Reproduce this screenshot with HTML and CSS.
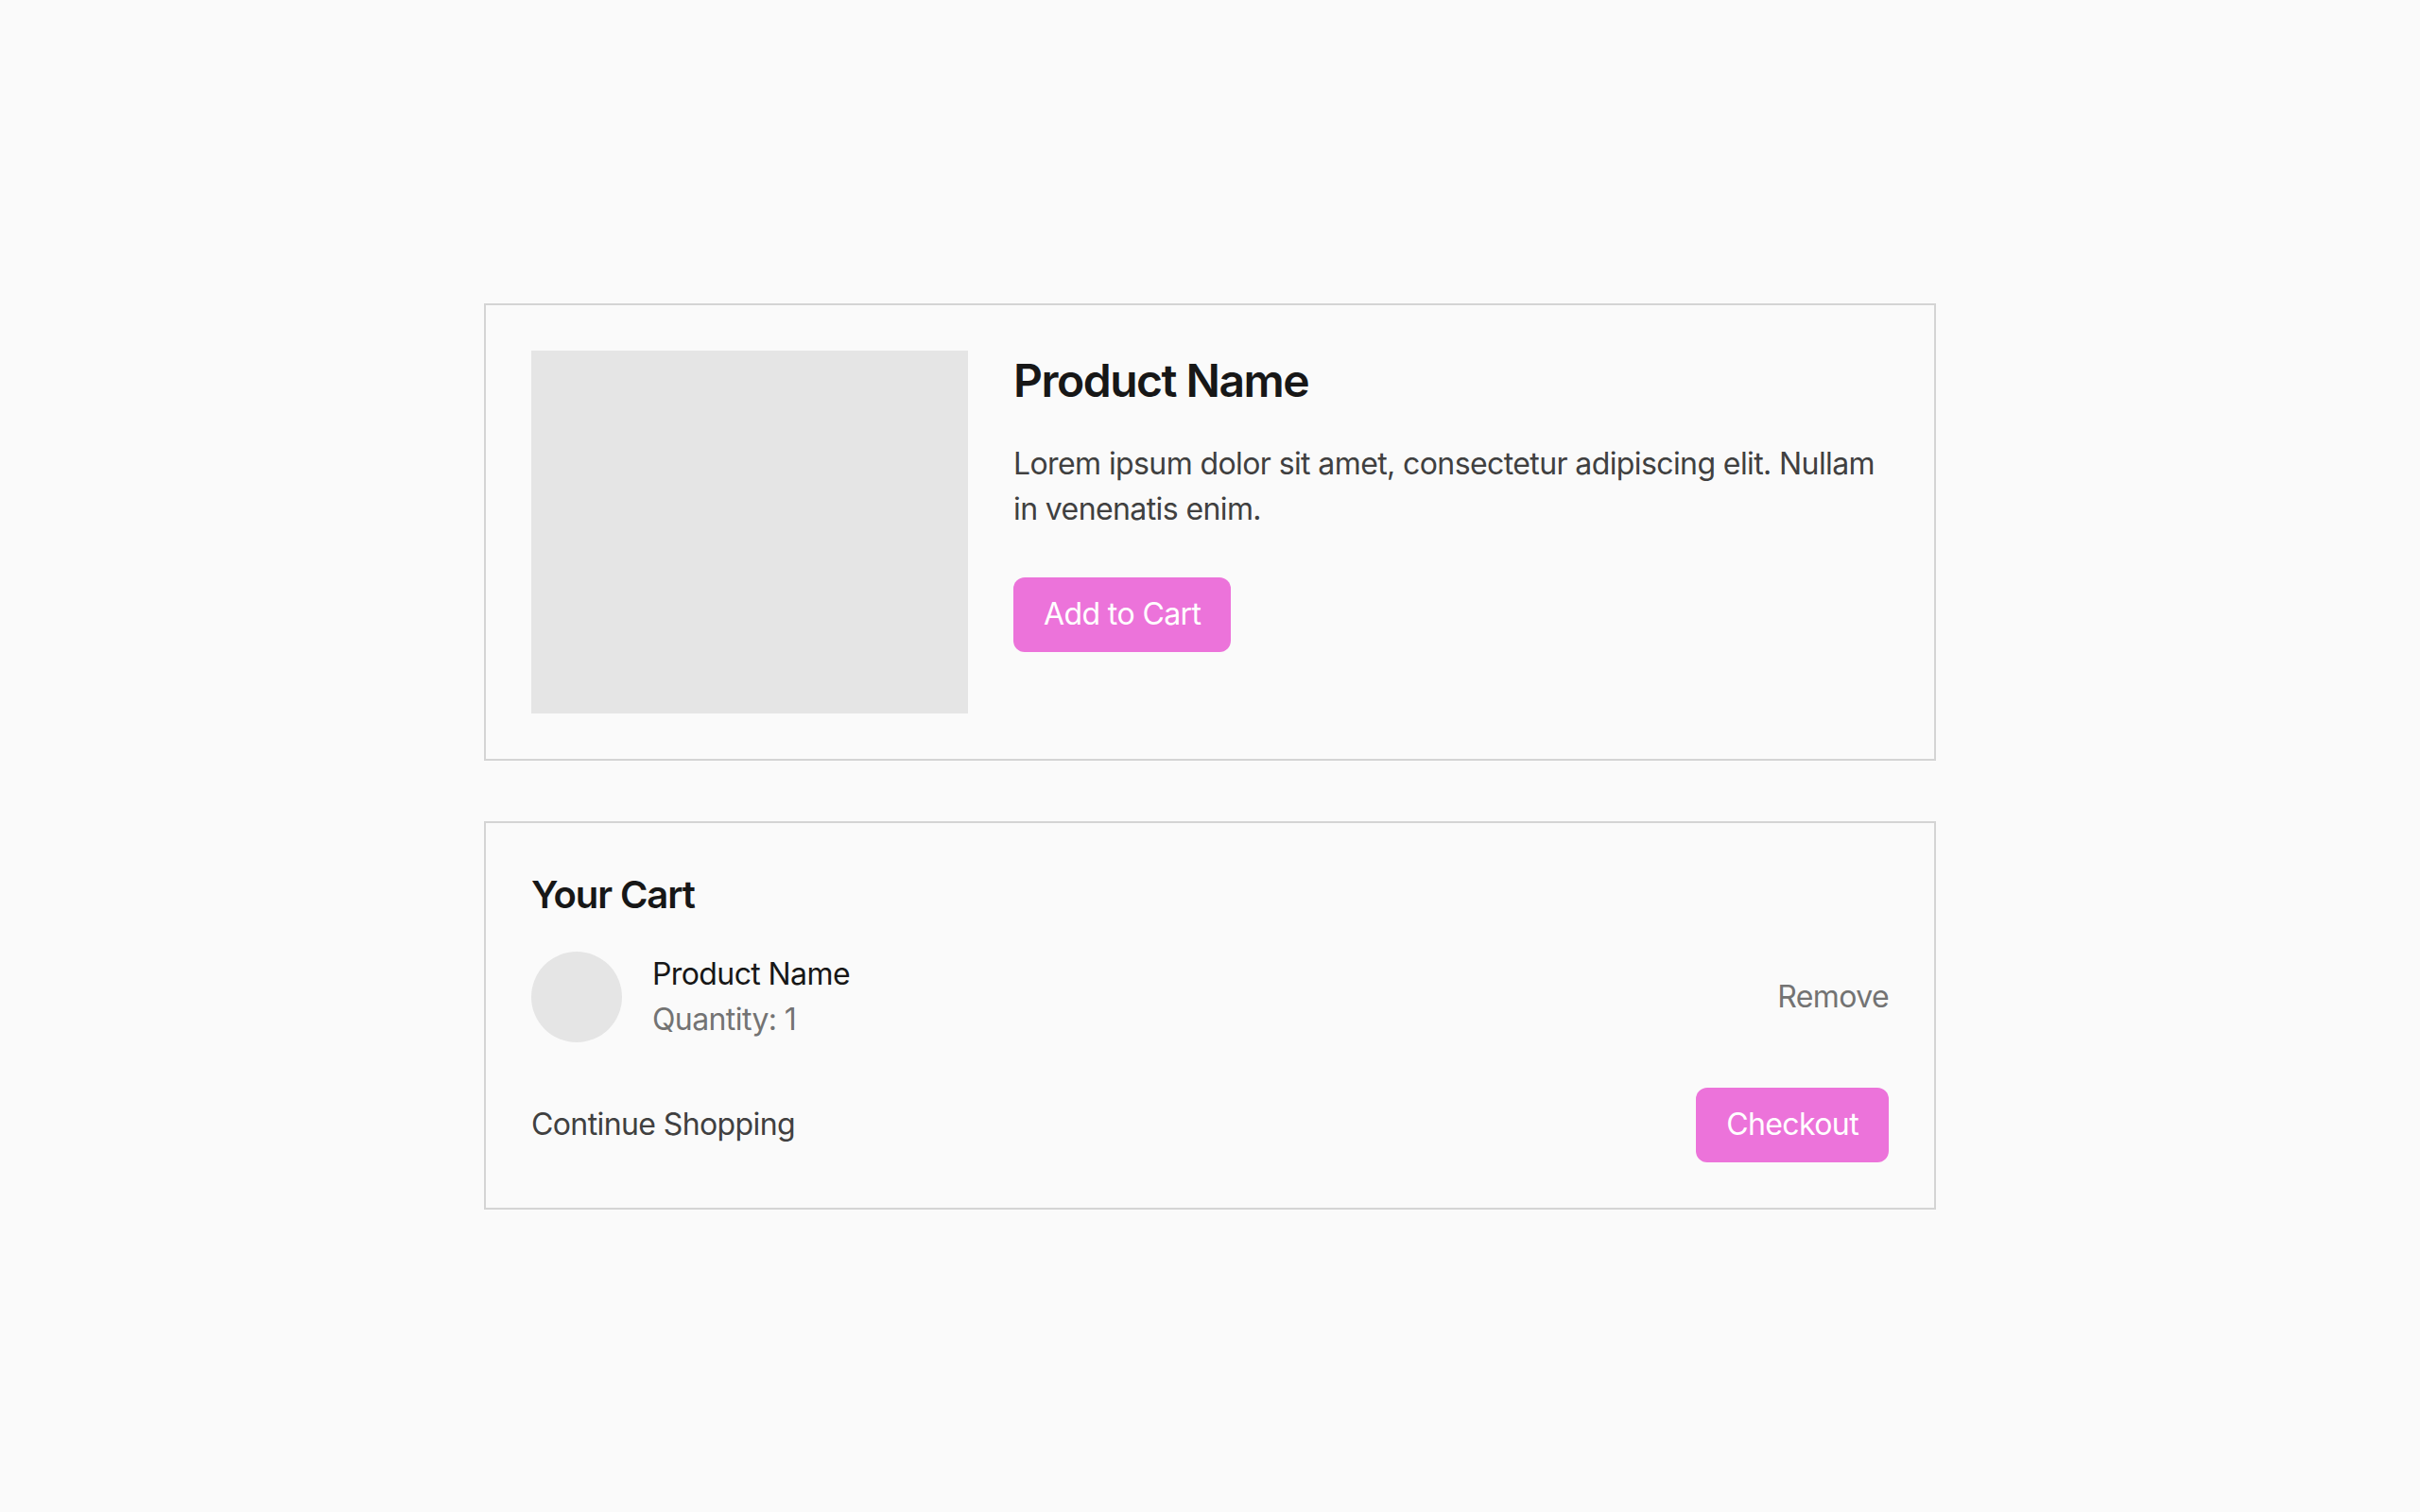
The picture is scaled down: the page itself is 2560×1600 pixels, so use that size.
FILE: index.html
```html
<!DOCTYPE html>
<html lang="en">
<head>
<meta charset="utf-8">
<title>Shop</title>
<link rel="stylesheet" href="styles.css">
</head>
<body>
  <main class="page">
    <section class="card product">
      <div class="product-image"></div>
      <div class="product-info">
        <h1 class="product-title">Product Name</h1>
        <p class="product-desc">Lorem ipsum dolor sit amet, consectetur adipiscing elit. Nullam in venenatis enim.</p>
        <button class="btn">Add to Cart</button>
      </div>
    </section>

    <section class="card cart">
      <h2 class="cart-title">Your Cart</h2>
      <div class="cart-item">
        <div class="cart-thumb"></div>
        <div class="cart-meta">
          <div class="cart-name">Product Name</div>
          <div class="cart-qty">Quantity: 1</div>
        </div>
        <a class="cart-remove" href="#">Remove</a>
      </div>
      <div class="cart-footer">
        <a class="link-continue" href="#">Continue Shopping</a>
        <button class="btn">Checkout</button>
      </div>
    </section>
  </main>
</body>
</html>
```

FILE: styles.css
```css
* {
  box-sizing: border-box;
}

html, body {
  margin: 0;
  padding: 0;
}

body {
  background: #fafafa;
  font-family: Inter, "Noto Sans", "Liberation Sans", sans-serif;
  color: #171717;
  font-size: 32px;
  line-height: 48px;
  letter-spacing: -0.6px;
}

.page {
  min-height: 100vh;
  display: flex;
  flex-direction: column;
  align-items: center;
  justify-content: center;
  gap: 64px;
}

.card {
  width: 1536px;
  border: 2px solid #d4d4d4;
  background: #fafafa;
  padding: 48px;
}

/* product card */
.product {
  display: flex;
  gap: 48px;
  align-items: flex-start;
}

.product-image {
  width: 462px;
  height: 384px;
  flex: none;
  background: #e5e5e5;
}

.product-info {
  flex: 1;
  display: flex;
  flex-direction: column;
  align-items: flex-start;
}

.product-title {
  margin: 0 0 32px;
  font-size: 48px;
  line-height: 64px;
  font-weight: 600;
  letter-spacing: -1.5px;
  color: #171717;
}

.product-desc {
  margin: 0 0 48px;
  color: #404040;
}

.btn {
  font-family: inherit;
  font-size: 32px;
  line-height: 48px;
  letter-spacing: -0.6px;
  padding: 15.5px 32px;
  border: none;
  border-radius: 12px;
  background: #ec73da;
  color: #ffffff;
  cursor: pointer;
}

/* cart card */
.cart-title {
  margin: 0 0 32px;
  font-size: 40px;
  line-height: 56px;
  font-weight: 600;
  letter-spacing: -1.1px;
  color: #171717;
}

.cart-item {
  display: flex;
  align-items: center;
  gap: 32px;
  margin-bottom: 48px;
}

.cart-thumb {
  width: 96px;
  height: 96px;
  border-radius: 50%;
  background: #e5e5e5;
  flex: none;
}

.cart-meta {
  flex: 1;
}

.cart-name {
  color: #171717;
}

.cart-qty {
  color: #737373;
}

.cart-remove {
  color: #737373;
  text-decoration: none;
}

.cart-footer {
  display: flex;
  align-items: center;
  justify-content: space-between;
}

.link-continue {
  color: #404040;
  text-decoration: none;
}
```
